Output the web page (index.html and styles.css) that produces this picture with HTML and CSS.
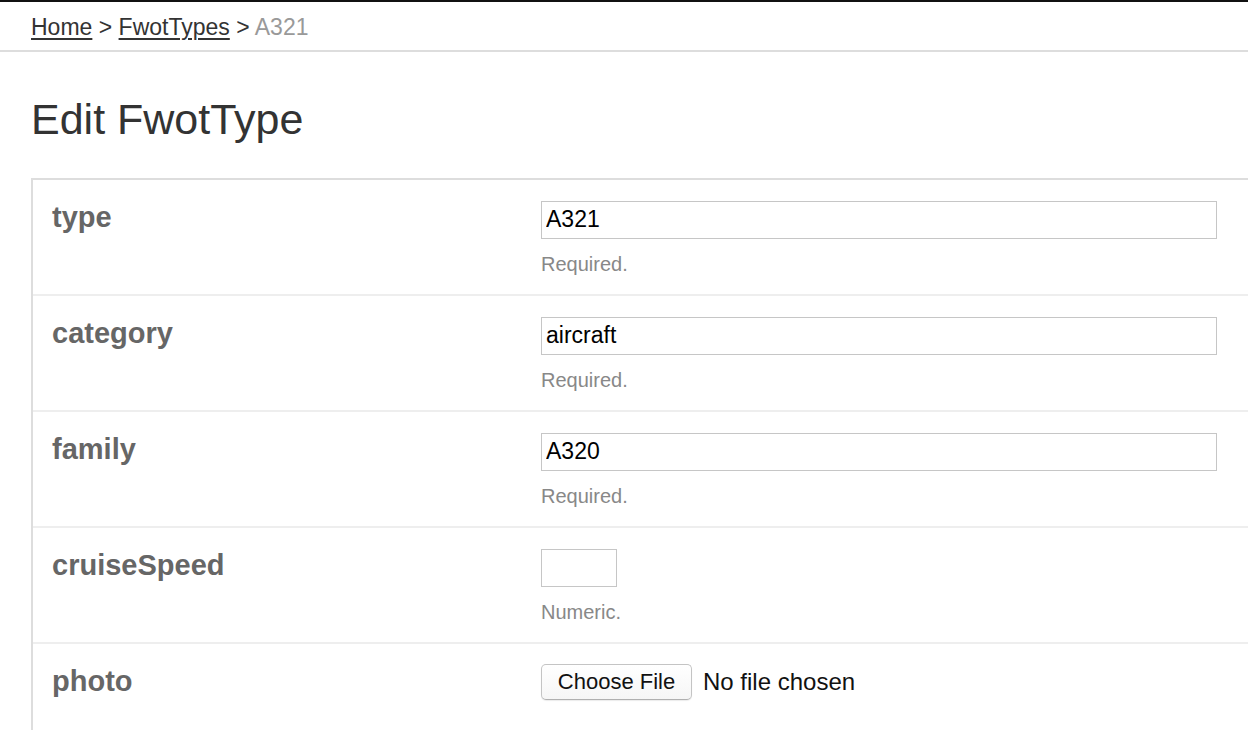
FILE: index.html
```html
<!DOCTYPE html>
<html lang="en">
<head>
<meta charset="utf-8">
<title>Edit FwotType</title>
<link rel="stylesheet" href="styles.css">
</head>
<body>
<nav class="crumbs">
  <a href="#">Home</a> &gt; <a href="#">FwotTypes</a> &gt; <span class="current">A321</span>
</nav>
<main class="page">
  <h1 class="title">Edit FwotType</h1>
  <form class="form">
    <div class="row">
      <div class="label">type</div>
      <div class="field">
        <input class="text-input" type="text" value="A321">
        <div class="help">Required.</div>
      </div>
    </div>
    <div class="row">
      <div class="label">category</div>
      <div class="field">
        <input class="text-input" type="text" value="aircraft">
        <div class="help">Required.</div>
      </div>
    </div>
    <div class="row">
      <div class="label">family</div>
      <div class="field">
        <input class="text-input" type="text" value="A320">
        <div class="help">Required.</div>
      </div>
    </div>
    <div class="row">
      <div class="label">cruiseSpeed</div>
      <div class="field">
        <input class="text-input num-input" type="text" value="">
        <div class="help">Numeric.</div>
      </div>
    </div>
    <div class="row">
      <div class="label">photo</div>
      <div class="field file-field">
        <button type="button" class="file-btn">Choose File</button>
        <span class="file-name">No file chosen</span>
      </div>
    </div>
  </form>
</main>
</body>
</html>
```

FILE: styles.css
```css
* { box-sizing: border-box; }

html, body {
  margin: 0;
  padding: 0;
  background: #fff;
}

body {
  font-family: "Liberation Sans", Arial, Helvetica, sans-serif;
  color: #333;
  border-top: 2px solid #111;
}

.crumbs {
  font-size: 23px;
  line-height: 26px;
  padding: 12px 31px 10px;
  border-bottom: 2px solid #ddd;
  color: #333;
}

.crumbs a {
  color: #333;
  text-decoration: underline;
  text-decoration-thickness: 2px;
  text-underline-offset: 3px;
}

.crumbs .current {
  color: #999;
}

.page {
  padding-left: 31px;
}

.title {
  font-size: 43px;
  font-weight: normal;
  line-height: 44px;
  margin: 45px 0 37px;
  color: #333;
}

.form {
  border-left: 2px solid #ddd;
  border-top: 2px solid #ddd;
}

.row {
  display: grid;
  grid-template-columns: 488px 1fr;
  height: 116px;
  border-bottom: 2px solid #eee;
}

.label {
  padding: 22px 0 0 19px;
  font-size: 29px;
  line-height: 31px;
  font-weight: bold;
  color: #666;
}

.field {
  padding: 21px 30px 0 20px;
}

.text-input {
  display: block;
  width: 676px;
  height: 38px;
  border: 1px solid #c6c6c6;
  border-radius: 0;
  padding: 0 4px 1px;
  font-family: "Liberation Sans", Arial, Helvetica, sans-serif;
  font-size: 23px;
  color: #000;
  background: #fff;
  outline: none;
}

.num-input {
  width: 76px;
}

.help {
  margin-top: 13px;
  font-size: 20px;
  line-height: 24px;
  color: #888;
}

.file-field {
  display: flex;
  align-items: center;
  align-self: start;
  padding-top: 20px;
  gap: 11px;
}

.file-btn {
  width: 151px;
  height: 36px;
  border: 1px solid #c4c4c4;
  border-bottom-color: #b0b0b0;
  border-radius: 5px;
  background: linear-gradient(#ffffff, #f6f6f6);
  box-shadow: 0 1px 1px rgba(0, 0, 0, 0.08);
  font-family: "Liberation Sans", Arial, Helvetica, sans-serif;
  font-size: 22px;
  color: #111;
  padding: 0;
}

.file-name {
  font-size: 24px;
  color: #111;
}
```
